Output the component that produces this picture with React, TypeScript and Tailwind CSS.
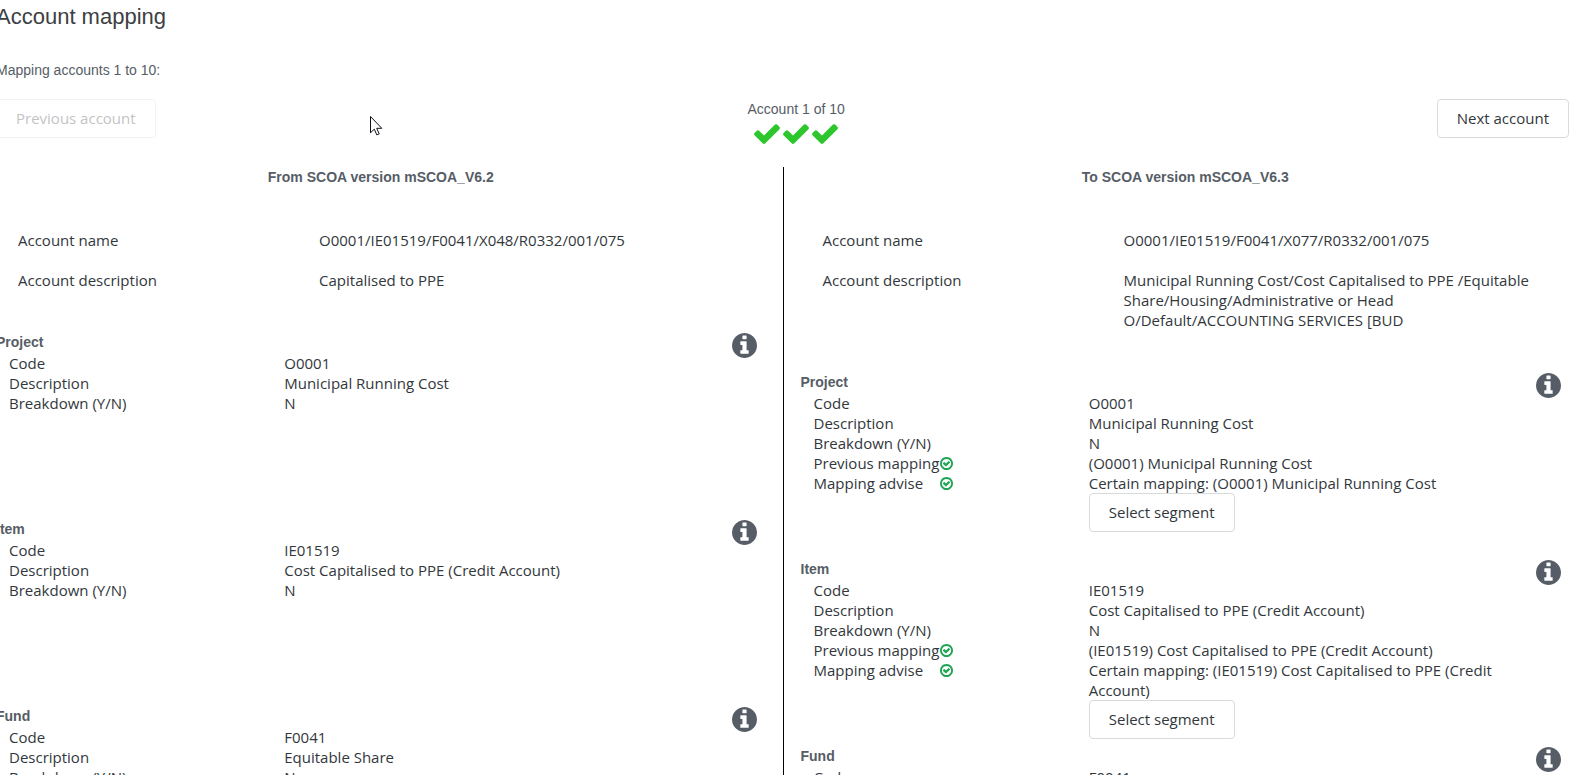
interface Segment {
  name: string
  code: string
  description: string
  breakdown: string
}

interface AccountColumnProps {
  title: string
  accountName: string
  accountDescription: string
  mapped?: boolean
}

interface IconProps {
  className?: string
}

const segments: Segment[] = [
  { name: 'Project', code: 'O0001', description: 'Municipal Running Cost', breakdown: 'N' },
  { name: 'Item', code: 'IE01519', description: 'Cost Capitalised to PPE (Credit Account)', breakdown: 'N' },
  { name: 'Fund', code: 'F0041', description: 'Equitable Share', breakdown: 'N' },
]

const buttonClass =
  "h-[39px] px-[19px] pb-0.5 rounded border border-[#d9dadc] bg-white font-['Open_Sans',sans-serif] text-[15px] leading-5 text-[#32373c] disabled:opacity-30"

const listClass = "font-['Open_Sans',sans-serif] text-[15px] leading-5 text-[#32373c]"

function CheckIcon({ className }: IconProps) {
  return (
    <svg className={className} viewBox="121 326 1550 1196" fill="currentColor" aria-hidden="true">
      <path d="M1671 566q0 40-28 68l-724 724-136 136q-28 28-68 28t-68-28l-136-136-362-362q-28-28-28-68t28-68l136-136q28-28 68-28t68 28l294 295 656-657q28-28 68-28t68 28l136 136q28 28 28 68z" />
    </svg>
  )
}

function CheckCircleIcon({ className }: IconProps) {
  return (
    <svg className={className} viewBox="128 128 1536 1536" fill="currentColor" aria-hidden="true">
      <path d="M1299 813l-422 422q-19 19-45 19t-45-19l-294-294q-19-19-19-45t19-45l102-102q19-19 45-19t45 19l147 147 275-275q19-19 45-19t45 19l102 102q19 19 19 45t-19 45zm141 83q0-148-73-273t-198-198-273-73-273 73-198 198-73 273 73 273 198 198 273 73 273-73 198-198 73-273zm224 0q0 209-103 385.5t-279.5 279.5-385.5 103-385.5-103-279.5-279.5-103-385.5 103-385.5 279.5-279.5 385.5-103 385.5 103 279.5 279.5 103 385.5z" />
    </svg>
  )
}

function InfoIcon({ className }: IconProps) {
  return (
    <svg className={className} viewBox="128 128 1536 1536" fill="currentColor" aria-hidden="true">
      <path d="M1152 1376v-160q0-14-9-23t-23-9h-96v-512q0-14-9-23t-23-9h-320q-14 0-23 9t-9 23v160q0 14 9 23t23 9h96v320h-96q-14 0-23 9t-9 23v160q0 14 9 23t23 9h448q14 0 23-9t9-23zm-128-896v-160q0-14-9-23t-23-9h-192q-14 0-23 9t-9 23v160q0 14 9 23t23 9h192q14 0 23-9t9-23zm640 416q0 209-103 385.5t-279.5 279.5-385.5 103-385.5-103-279.5-279.5-103-385.5 103-385.5 279.5-279.5 385.5-103 385.5 103 279.5 279.5 103 385.5z" />
    </svg>
  )
}

function MappingLabel({ text }: { text: string }) {
  return (
    <dt className="flex h-5 items-center">
      <span className="w-[126px] whitespace-nowrap">{text}</span>
      <CheckCircleIcon className="size-[13px] shrink-0 text-[#21a453]" />
    </dt>
  )
}

function SegmentBlock({ segment, mapped }: { segment: Segment; mapped?: boolean }) {
  const result = `(${segment.code}) ${segment.description}`

  return (
    <section className="flex items-start min-h-[187px] pl-[17px] pr-[26px]">
      <div className="flex-1">
        <h3 className="text-sm leading-[22px] font-bold text-[#565d66]">{segment.name}</h3>
        <dl className={`${listClass} grid grid-cols-[8fr_13fr] pl-[13px]`}>
          <dt>Code</dt>
          <dd>{segment.code}</dd>
          <dt>Description</dt>
          <dd>{segment.description}</dd>
          <dt>Breakdown (Y/N)</dt>
          <dd>{segment.breakdown}</dd>
          {mapped && (
            <>
              <MappingLabel text="Previous mapping" />
              <dd>{result}</dd>
              <MappingLabel text="Mapping advise" />
              <dd>
                <p>{`Certain mapping: ${result}`}</p>
                <button type="button" className={`${buttonClass} block`}>Select segment</button>
              </dd>
            </>
          )}
        </dl>
      </div>
      <button type="button" aria-label={`${segment.name} information`} className="mt-0.5 text-[#565d66]">
        <InfoIcon className="size-[25px]" />
      </button>
    </section>
  )
}

function AccountColumn({ title, accountName, accountDescription, mapped }: AccountColumnProps) {
  return (
    <div className="flex-1">
      <h2 className="text-center text-sm font-bold text-[#565d66]">{title}</h2>
      <dl className={`${listClass} mt-[43px] mb-[41px] grid grid-cols-[5fr_7fr] gap-y-5 pl-[39px] pr-[42px]`}>
        <dt>Account name</dt>
        <dd>{accountName}</dd>
        <dt>Account description</dt>
        <dd>{accountDescription}</dd>
      </dl>
      {segments.map((segment) => (
        <SegmentBlock key={segment.name} segment={segment} mapped={mapped} />
      ))}
    </div>
  )
}

export default function App() {
  return (
    <main className="relative h-screen overflow-hidden bg-white font-['Liberation_Sans',Arial,sans-serif] text-sm text-[#565d66]">
      <div className="-ml-1 mr-[7px]">
        <h1 className="pt-[3px] text-[22px] leading-7 text-[#3c4043]">Account mapping</h1>
        <p className="mt-[29px]">Mapping accounts 1 to 10:</p>
        <div className="mt-[19px] flex items-start justify-between">
          <button type="button" disabled className={buttonClass}>Previous account</button>
          <div className="flex flex-col items-center">
            <p>Account 1 of 10</p>
            <div className="mt-[5px] flex gap-[3px] text-[#2dc72d]">
              <CheckIcon className="w-[26px] h-5" />
              <CheckIcon className="w-[26px] h-5" />
              <CheckIcon className="w-[26px] h-5" />
            </div>
          </div>
          <button type="button" className={buttonClass}>Next account</button>
        </div>
      </div>

      <div className="-ml-[21px] -mr-[11px] mt-[23px] flex">
        <AccountColumn
          title="From SCOA version mSCOA_V6.2"
          accountName="O0001/IE01519/F0041/X048/R0332/001/075"
          accountDescription="Capitalised to PPE"
        />
        <div className="w-px bg-black" />
        <AccountColumn
          title="To SCOA version mSCOA_V6.3"
          accountName="O0001/IE01519/F0041/X077/R0332/001/075"
          accountDescription="Municipal Running Cost/Cost Capitalised to PPE /Equitable Share/Housing/Administrative or Head O/Default/ACCOUNTING SERVICES [BUD"
          mapped
        />
      </div>

      {/* mouse pointer */}
      <svg className="absolute left-[370px] top-[116px]" width="13" height="20" viewBox="0 0 13 20" aria-hidden="true">
        <path d="M.5.5v16.3l3.8-3.6 2.5 5.7 2.4-1-2.5-5.6h5.1z" fill="#fff" stroke="#10101c" />
      </svg>
    </main>
  )
}
